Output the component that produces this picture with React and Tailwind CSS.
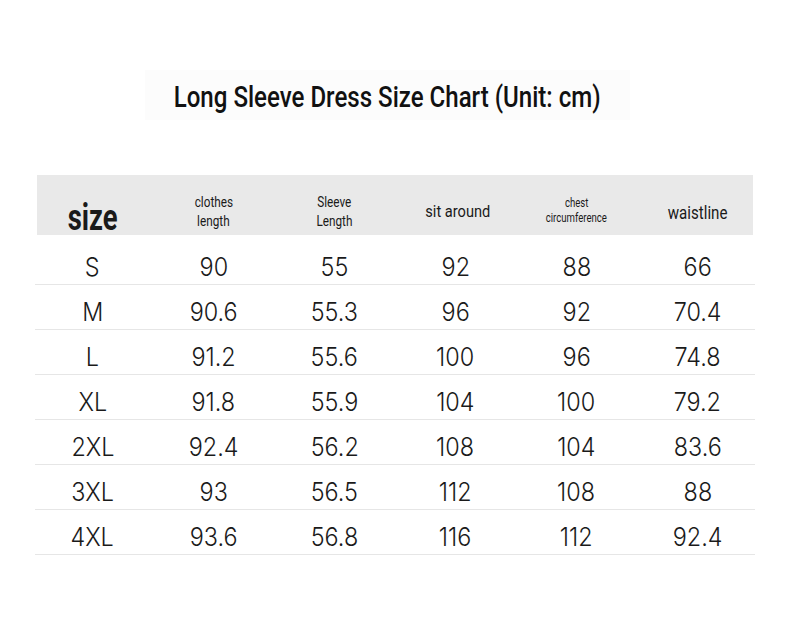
export default function App() {
  const rows = [
    ["S", "90", "55", "92", "88", "66"],
    ["M", "90.6", "55.3", "96", "92", "70.4"],
    ["L", "91.2", "55.6", "100", "96", "74.8"],
    ["XL", "91.8", "55.9", "104", "100", "79.2"],
    ["2XL", "92.4", "56.2", "108", "104", "83.6"],
    ["3XL", "93", "56.5", "112", "108", "88"],
    ["4XL", "93.6", "56.8", "116", "112", "92.4"],
  ];
  const cond = { fontFamily: 'Roboto, "Liberation Sans", sans-serif' };
  const num = { fontFamily: 'Inter, Lato, sans-serif' };
  return (
    <div className="w-[790px] h-[620px] bg-white relative">
      <div className="pt-[70px] flex justify-center">
        <div className="w-[485px] h-[50px] bg-[#fcfcfc] flex items-center justify-center -translate-x-[8px]">
          <span
            className="inline-block whitespace-nowrap text-[29px] font-medium text-[#111] leading-none scale-x-[0.83] origin-center translate-y-[2px]"
            style={cond}
          >
            Long Sleeve Dress Size Chart (Unit: cm)
          </span>
        </div>
      </div>
      <div className="mt-[55px] ml-[37px] w-[716px]">
        <div className="h-[60px] bg-[#e9e9e9]">
          <div className="-mx-[5px] grid grid-cols-6 h-full text-[#1a1a1a]" style={cond}>
            <div className="flex items-end justify-center">
              <span className="inline-block text-[37px] font-bold leading-none scale-x-[0.74] translate-y-[1px]">size</span>
            </div>
            <div className="flex flex-col items-center justify-center text-[14px] leading-[19px] pt-[14px]">
              <span className="inline-block scale-x-[0.84]">clothes</span>
              <span className="inline-block scale-x-[0.84]">length</span>
            </div>
            <div className="flex flex-col items-center justify-center text-[14px] leading-[19px] pt-[14px]">
              <span className="inline-block scale-x-[0.84]">Sleeve</span>
              <span className="inline-block scale-x-[0.84]">Length</span>
            </div>
            <div className="flex items-center justify-center text-[17px] pt-[14px]">
              <span className="inline-block scale-x-[0.86] whitespace-nowrap translate-x-[2px]">sit around</span>
            </div>
            <div className="flex flex-col items-center justify-center text-[12px] leading-[15px] pt-[12px]">
              <span className="inline-block scale-x-[0.8]">chest</span>
              <span className="inline-block scale-x-[0.8]">circumference</span>
            </div>
            <div className="flex items-center justify-center text-[18px] pt-[14px]">
              <span className="inline-block scale-x-[0.84]">waistline</span>
            </div>
          </div>
        </div>
        {rows.map((r, i) => (
          <div
            key={i}
            className={`${i === 0 ? "h-[50px] pt-[15px]" : "h-[45px] pt-[10px]"} border-b border-[#e6e6e6] -mx-[2px]`}
          >
            <div
              className="-mx-[3px] grid grid-cols-6 h-full items-center text-[26px] font-light text-[#1a1a1a]"
              style={num}
            >
              {r.map((c, j) => (
                <div key={j} className="text-center leading-none">
                  <span className="inline-block scale-x-[0.9]">{c}</span>
                </div>
              ))}
            </div>
          </div>
        ))}
      </div>
    </div>
  );
}
